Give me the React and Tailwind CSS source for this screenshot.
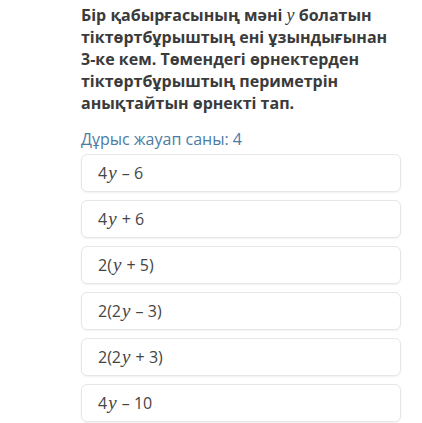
import React from 'react';

const Y = () => (
  <span className="italic text-[19px] leading-[20px] mx-[1px]" style={{ fontFamily: '"Liberation Serif", serif' }}>y</span>
);

const answers = [
  <>4<Y /> – 6</>,
  <>4<Y /> + 6</>,
  <>2(<Y /> + 5)</>,
  <>2(2<Y /> – 3)</>,
  <>2(2<Y /> + 3)</>,
  <>4<Y /> – 10</>,
];

export default function App() {
  return (
    <div className="w-[422px] h-[423px] bg-white overflow-hidden font-['Open_Sans',sans-serif]">
      <div className="ml-[81px] w-[320px] pt-[4px]">
        <p className="text-[16px] leading-[22px] font-bold text-[#3b3b3b]">
          Бір қабырғасының мәні <span className="font-normal italic text-[18px] leading-[20px]" style={{ fontFamily: '"Liberation Serif", serif' }}>y</span> болатын тіктөртбұрыштың ені ұзындығынан 3-ке кем. Төмендегі өрнектерден тіктөртбұрыштың периметрін анықтайтын өрнекті тап.
        </p>
        <p className="mt-[15px] text-[16px] leading-[20px] text-[#4b7ba6]">Дұрыс жауап саны: 4</p>
        <div className="mt-[5px] flex flex-col gap-[8px]">
          {answers.map((a, i) => (
            <div key={i} className="h-[38px] rounded-[6px] border border-[#e6e6e6] shadow-[0_1px_2px_rgba(0,0,0,0.06)] flex items-center pl-[16px] text-[16px] text-[#454545]">
              <span>{a}</span>
            </div>
          ))}
        </div>
      </div>
    </div>
  );
}
